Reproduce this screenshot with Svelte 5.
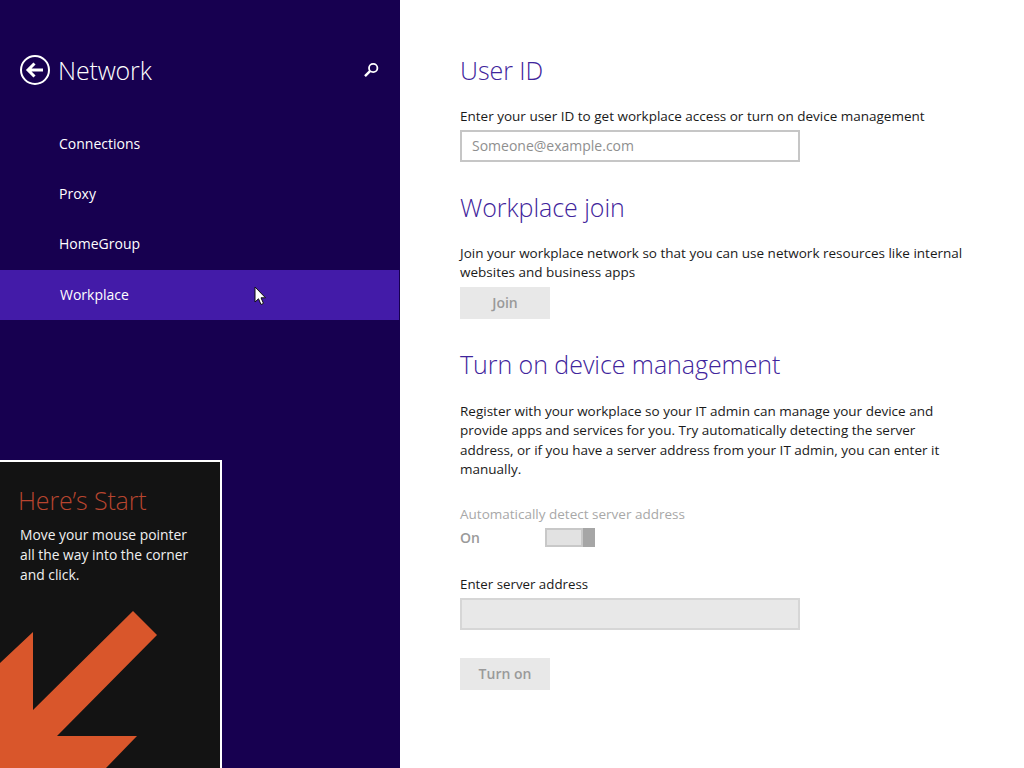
<script>
  const navItems = ["Connections", "Proxy", "HomeGroup", "Workplace"];
</script>

<div class="page">
  <aside class="sidebar">
    <header class="top">
      <svg class="back" width="30" height="30" viewBox="0 0 30 30">
        <circle cx="15" cy="15" r="14" fill="none" stroke="#fff" stroke-width="2" />
        <path d="M8 15H23M14.5 8.5L8 15l6.5 6.5" fill="none" stroke="#fff" stroke-width="3" />
      </svg>
      <h1>Network</h1>
      <svg class="search" width="16" height="16" viewBox="0 0 16 16">
        <circle cx="10.2" cy="6" r="4.2" fill="none" stroke="#fff" stroke-width="1.8" />
        <path d="M7 9.2L2 14.2" stroke="#fff" stroke-width="2.4" />
      </svg>
    </header>
    <nav>
      {#each navItems as item}
        <div class="nav-item" class:active={item === "Workplace"}>{item}</div>
      {/each}
    </nav>

    <div class="tip">
      <h2>Here’s Start</h2>
      <p>Move your mouse pointer<br />all the way into the corner<br />and click.</p>
      <svg class="arrow" width="220" height="160" viewBox="0 0 220 160">
        <path d="M133 3L157 27L57 128H137L106 160H0V55L33 24V102z" fill="#d9562b" />
      </svg>
    </div>

    <svg class="cursor" width="13" height="20" viewBox="0 0 13 20">
      <path d="M1 1V16L4.5 12.8L7 18.5L9.5 17.4L7 11.8H11.5z" fill="#fff" stroke="#111" stroke-width="1" />
    </svg>
  </aside>

  <main>
    <section class="user">
      <h2>User ID</h2>
      <p>Enter your user ID to get workplace access or turn on device management</p>
      <div class="field">Someone@example.com</div>
    </section>

    <section class="join">
      <h2>Workplace join</h2>
      <p>Join your workplace network so that you can use network resources like internal websites and business apps</p>
      <div class="btn">Join</div>
    </section>

    <section class="device">
      <h2>Turn on device management</h2>
      <p>Register with your workplace so your IT admin can manage your device and provide apps and services for you. Try automatically detecting the server address, or if you have a server address from your IT admin, you can enter it manually.</p>
      <div class="detect">Automatically detect server address</div>
      <div class="toggle-row">
        <span>On</span>
        <div class="toggle"><div class="track"></div><div class="thumb"></div></div>
      </div>
      <div class="label">Enter server address</div>
      <div class="field disabled"></div>
      <div class="btn turn">Turn on</div>
    </section>
  </main>
</div>

<style>
  :global(body) {
    margin: 0;
    background: #fff;
  }

  .page {
    display: flex;
    width: 1024px;
    height: 768px;
    overflow: hidden;
    font-family: "Open Sans", "Noto Sans", sans-serif;
    font-size: 14px;
  }

  .sidebar {
    position: relative;
    width: 400px;
    height: 768px;
    flex-shrink: 0;
    background: #170050;
    color: #fff;
  }

  .top {
    display: flex;
    align-items: center;
    height: 30px;
    padding: 55px 21px 0 20px;
  }

  .top h1 {
    margin: 0 0 0 8px;
    font-size: 25px;
    font-weight: 300;
    letter-spacing: -0.15px;
  }

  .search {
    margin-left: auto;
  }

  nav {
    margin-top: 35px;
  }

  .nav-item {
    height: 50px;
    line-height: 48px;
    padding-left: 59px;
    margin-right: 1px;
  }

  .nav-item.active {
    background: #431ba8;
    line-height: 50px;
    padding-left: 60px;
  }

  .tip {
    position: absolute;
    left: -2px;
    top: 460px;
    width: 224px;
    height: 308px;
    box-sizing: border-box;
    border: 2px solid #fff;
    border-bottom: 0;
    background: #131313;
    overflow: hidden;
  }

  .tip h2 {
    margin: 22px 0 0 18px;
    font-size: 25px;
    font-weight: 300;
    line-height: 32px;
    letter-spacing: -0.15px;
    color: #b8452f;
  }

  .tip p {
    margin: 9px 0 0 20px;
    font-size: 13.85px;
    line-height: 20px;
    color: #f0f0f0;
  }

  .arrow {
    position: absolute;
    left: 0;
    bottom: 0;
  }

  .cursor {
    position: absolute;
    left: 254px;
    top: 286px;
  }

  main {
    flex: 1;
    padding: 0 60px;
    color: #1a1a1a;
    font-size: 13.5px;
  }

  h2 {
    font-weight: 300;
  }

  section h2 {
    margin: 0;
    font-size: 25px;
    line-height: 34px;
    letter-spacing: -0.05px;
    color: #3f259c;
  }

  section p {
    margin: 0;
    line-height: 19.5px;
  }

  .user {
    padding-top: 53px;
  }

  .user p {
    margin-top: 20px;
  }

  .field {
    box-sizing: border-box;
    width: 340px;
    height: 32px;
    margin-top: 3px;
    border: 2px solid #c6c6c6;
    padding-left: 10px;
    font-size: 14px;
    line-height: 28px;
    color: #8f8f8f;
  }

  .join {
    padding-top: 28px;
  }

  .join p {
    margin-top: 20px;
  }

  .btn {
    width: 90px;
    height: 32px;
    margin-top: 4px;
    background: #e8e8e8;
    color: #9a9a9a;
    font-size: 14px;
    font-weight: 600;
    text-align: center;
    line-height: 32px;
  }

  .device {
    padding-top: 28px;
  }

  .device p {
    margin-top: 21px;
  }

  .detect {
    margin-top: 25px;
    color: #a8a8a8;
  }

  .toggle-row {
    display: flex;
    align-items: center;
    height: 20px;
    margin-top: 5px;
    color: #9a9a9a;
    font-size: 14px;
    font-weight: 600;
  }

  .toggle {
    display: flex;
    width: 50px;
    height: 19px;
    margin-left: 65px;
  }

  .track {
    flex: 1;
    box-sizing: border-box;
    border: 2px solid #c8c8c8;
    background: #e2e2e2;
  }

  .thumb {
    width: 12px;
    background: #a6a6a6;
  }

  .label {
    margin-top: 27px;
    font-size: 13.3px;
  }

  .field.disabled {
    margin-top: 5px;
    background: #e8e8e8;
    border-color: #d6d6d6;
  }

  .btn.turn {
    margin-top: 28px;
  }
</style>
